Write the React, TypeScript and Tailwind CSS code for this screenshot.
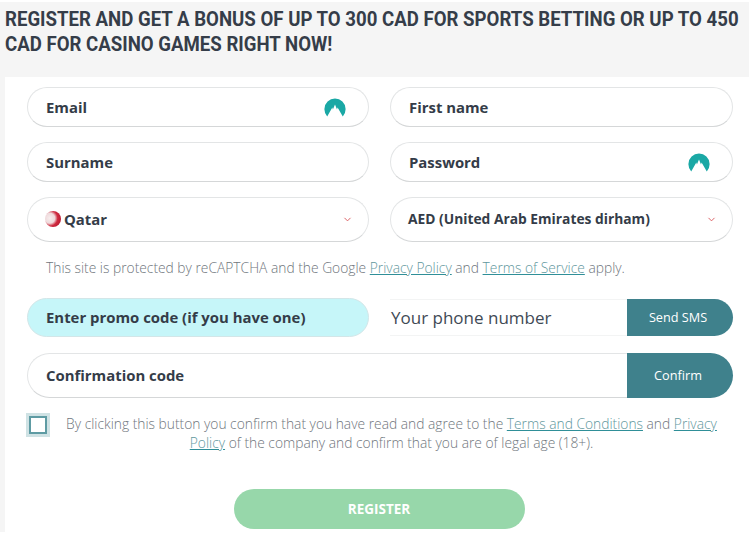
import React from "react";
import { ChevronDown } from "lucide-react";

const NordIcon = () => (
  <svg width="22" height="20" viewBox="0 0 22 20" className="shrink-0">
    <path
      d="M3.2 19.4A10.6 10.6 0 1 1 18.8 19.4L13.6 10.6 13 12.6 11 7.4 8.9 12.6 8.3 10.6Z"
      fill="#1aa8a5"
    />
  </svg>
);

const QatarFlag = () => (
  <span className="w-[16px] h-[16px] rounded-full shrink-0 bg-[radial-gradient(circle_at_30%_45%,#f7eeee_0%,#efd9db_35%,#cf2b40_55%,#a80c26_100%)]" />
);

const Field = ({ label, icon }: { label: string; icon?: boolean }) => (
  <div className="h-[40px] rounded-full border border-[#e3e5e6] border-b-[#d5d7d8] bg-white flex items-center justify-between pl-[18px] pr-[22px]">
    <span className="text-[14.9px] font-bold text-[#343c48]">{label}</span>
    {icon && <NordIcon />}
  </div>
);

const SelectField = ({ children }: { children: React.ReactNode }) => (
  <div className="h-[45px] rounded-full border border-[#e3e5e6] border-b-[#d5d7d8] bg-white flex items-center justify-between pl-[17px] pr-[15px]">
    {children}
    <ChevronDown size={11} color="#d9575c" strokeWidth={2} />
  </div>
);

const Link = ({ children }: { children: React.ReactNode }) => (
  <a className="text-[#5f979d] underline decoration-[#2f8f98]">{children}</a>
);

export default function App() {
  return (
    <div className="min-h-[558px] bg-white pt-[2px] font-['Open_Sans',sans-serif]">
      <div className="w-[749px] bg-[#f5f5f5] pl-[5px]">
        <div className="h-[75px] pt-[5px] overflow-hidden">
          <h1 className="w-[840px] origin-left scale-x-[0.887] font-['Roboto',sans-serif] font-bold text-[#353d49] text-[21px] leading-[25px] uppercase">
            Register and get a bonus of up to 300 CAD for sports betting or up to 450 CAD for casino games right now!
          </h1>
        </div>
        <div className="bg-white h-[455px] pt-[10px] pl-[22px] pr-[16px]">
          <div className="grid grid-cols-[342px_343px] gap-x-[21px] gap-y-[15px]">
            <Field label="Email" icon />
            <Field label="First name" />
            <Field label="Surname" />
            <Field label="Password" icon />
            <SelectField>
              <span className="flex items-center gap-[3px] text-[14.9px] font-bold text-[#343c48]">
                <QatarFlag />
                Qatar
              </span>
            </SelectField>
            <SelectField>
              <span className="text-[13.8px] font-bold text-[#343c48]">AED (United Arab Emirates dirham)</span>
            </SelectField>
          </div>

          <p className="mt-[16px] pl-[19px] text-[13.8px] leading-[20px] font-light text-[#6f767d]">
            This site is protected by reCAPTCHA and the Google <Link>Privacy Policy</Link> and <Link>Terms of Service</Link> apply.
          </p>

          <div className="mt-[20px] grid grid-cols-[342px_343px] gap-x-[21px] items-center">
            <div className="h-[39px] rounded-full border border-[#d3e6e8] bg-[#c6f6f9] flex items-center pl-[18px]">
              <span className="text-[14.9px] font-bold text-[#343c48]">Enter promo code (if you have one)</span>
            </div>
            <div className="h-[37px] flex">
              <div className="flex-1 border-y border-[#f3f4f4] flex items-center pl-[1px] text-[17px] text-[#3f4a55]">Your phone number</div>
              <button className="w-[106px] bg-[#3f818c] text-white text-[12.7px] pr-[4px] rounded-r-full">Send SMS</button>
            </div>
          </div>

          <div className="mt-[16px] h-[45px] flex">
            <div className="flex-1 rounded-l-full border border-r-0 border-[#e3e5e6] border-b-[#d5d7d8] flex items-center pl-[18px]">
              <span className="text-[14.9px] font-bold text-[#343c48]">Confirmation code</span>
            </div>
            <button className="w-[106px] bg-[#3f818c] text-white text-[12.7px] pr-[4px] rounded-r-full">Confirm</button>
          </div>

          <div className="mt-[15px] -ml-[1px] flex">
            <div className="w-[24px] h-[24px] shrink-0 bg-[#cfe2e4] p-[3px]">
              <div className="w-full h-full bg-white border-2 border-[#5e9ba3]" />
            </div>
            <p className="flex-1 text-center text-[13.8px] leading-[19px] font-light text-[#6f767d] pt-[1px]">
              By clicking this button you confirm that you have read and agree to the <Link>Terms and Conditions</Link> and <Link>Privacy Policy</Link> of the company and confirm that you are of legal age (18+).
            </p>
          </div>

          <div className="mt-[37px] flex justify-center pr-[2px]">
            <button className="w-[291px] h-[40px] rounded-full bg-[#97d7aa] text-white text-[13.5px] font-bold">REGISTER</button>
          </div>
        </div>
      </div>
    </div>
  );
}
